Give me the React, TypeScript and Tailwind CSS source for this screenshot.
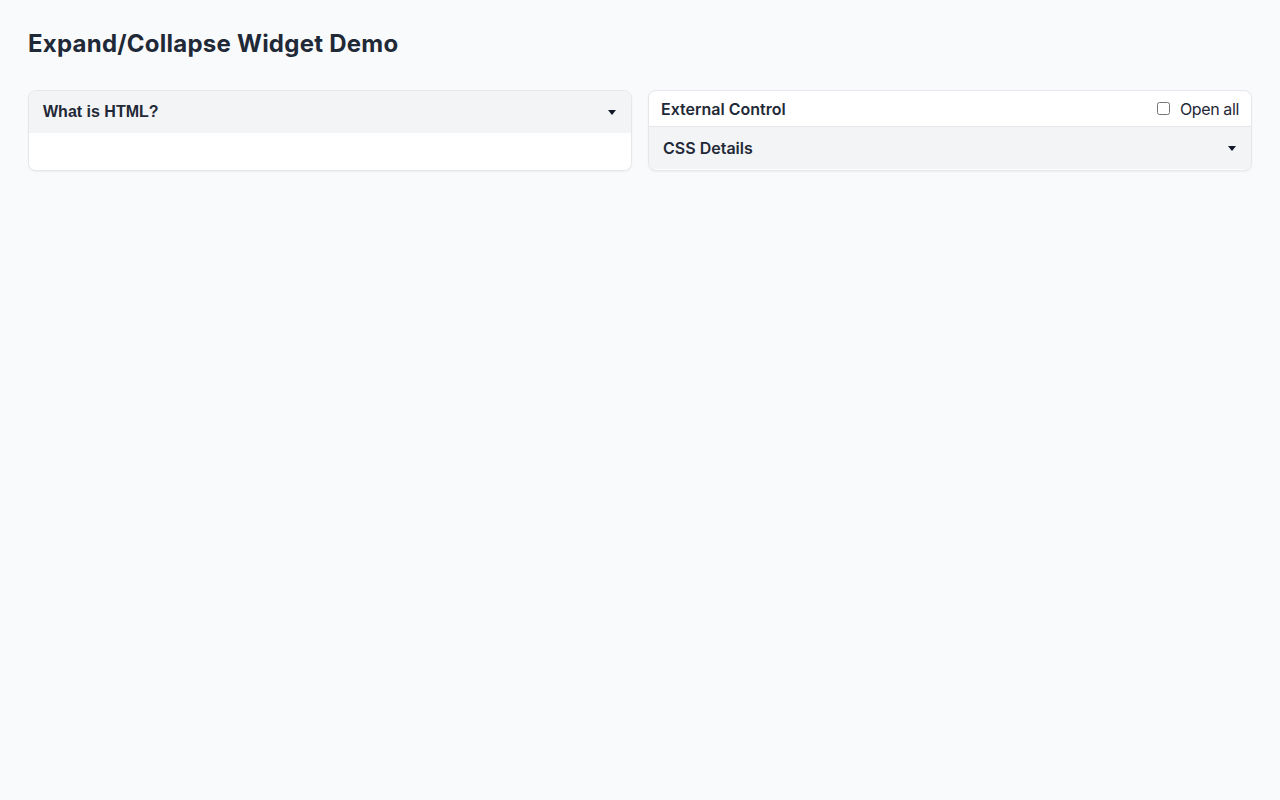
function Caret() {
  return (
    <span className="inline-block h-0 w-0 border-x-[4px] border-t-[5px] border-x-transparent border-t-[#111827]" />
  );
}

function SummaryRow({ title, className }: { title: string; className?: string }) {
  return (
    <div className={`flex h-[42px] items-center justify-between bg-[#f3f4f6] pr-[15px] ${className ?? ''}`}>
      <span className="text-base leading-5 text-[#1f2937]">{title}</span>
      <Caret />
    </div>
  );
}

export default function App() {
  return (
    <div className="min-h-screen bg-[#f9fafb] p-7 text-[#1f2937]" style={{ fontFamily: 'Inter, "Noto Sans", sans-serif' }}>
      <h1 className="mb-[30px] text-2xl leading-8 font-bold tracking-[0.01em]">Expand/Collapse Widget Demo</h1>

      <div className="grid grid-cols-2 gap-4">
        <div className="overflow-hidden rounded-lg border border-[#e5e7eb] bg-white shadow-[0_1px_2px_rgba(0,0,0,0.05)]">
          <SummaryRow
            title="What is HTML?"
            className="pl-[14px] font-bold [font-family:'Liberation_Sans',Arial,sans-serif]"
          />
          <div className="h-[37px] bg-white" />
        </div>

        <div className="overflow-hidden rounded-lg border border-[#e5e7eb] bg-white shadow-[0_1px_2px_rgba(0,0,0,0.05)]">
          <div className="flex h-9 items-center justify-between border-b border-[#e5e7eb] px-3">
            <span className="text-base leading-6 font-semibold">External Control</span>
            <label className="flex items-center gap-[10px] text-base leading-6">
              <input type="checkbox" className="m-0 h-[13px] w-[13px]" />
              <span className="tracking-[-0.023em]">Open all</span>
            </label>
          </div>
          <SummaryRow title="CSS Details" className="pl-[14px] font-semibold" />
        </div>
      </div>
    </div>
  );
}
